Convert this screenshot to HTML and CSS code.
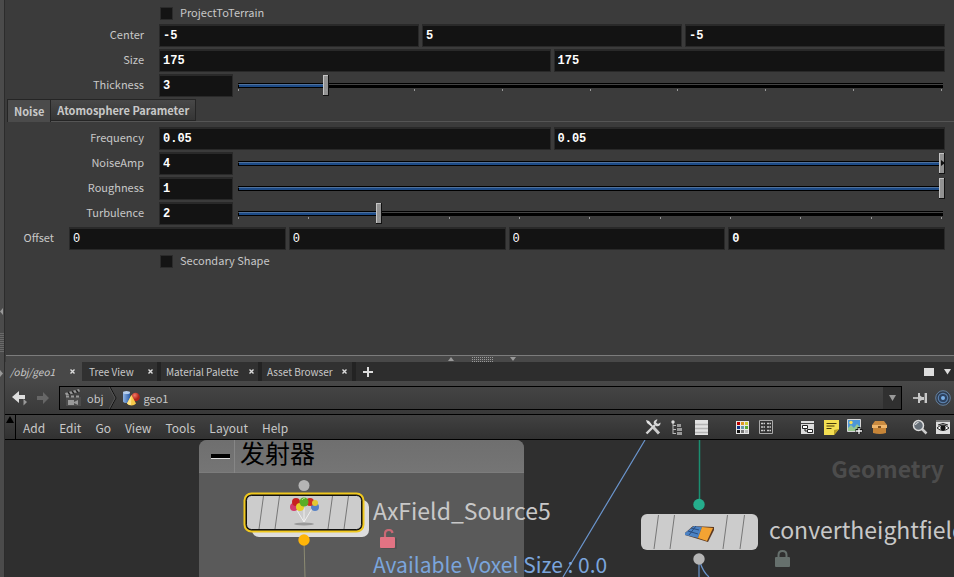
FILE: index.html
```html
<!DOCTYPE html>
<html lang="en">
<head>
<meta charset="utf-8">
<title>/obj/geo1</title>
<link rel="stylesheet" href="styles.css">
</head>
<body>
<div class="rail">
  <svg class="rail-marks" width="4" height="76" viewBox="0 0 4 76"><path d="M3 1v7L0 4.500z" fill="#999"/><path d="M1 26v20M3 26v20" stroke="#8a8a8a" stroke-dasharray="1 1"/><path d="M0 63v7l3-3.500z" fill="#999"/></svg>
</div>
<div class="main">
  <form class="params">
    <div class="check-row first"><input type="checkbox" id="project"><label for="project">ProjectToTerrain</label></div>
    <div class="row"><label for="center1">Center</label><div class="fields"><input type="text" id="center1" value="-5"><input type="text" aria-label="Center Y" value="5"><input type="text" aria-label="Center Z" value="-5"></div></div>
    <div class="row"><label for="size1">Size</label><div class="fields"><input type="text" id="size1" value="175"><input type="text" aria-label="Size Y" value="175"></div></div>
    <div class="row"><label for="thick">Thickness</label><input class="num" type="text" id="thick" value="3"><div class="slider"><input type="range" aria-label="Thickness" min="2" max="10" value="3" style="--fill:0.125"><div class="ticks"><i></i><i></i><i></i><i></i><i></i><i></i><i></i><i></i><i></i></div></div></div>
    <div class="tabs"><button type="button" class="on">Noise</button><button type="button">Atomosphere Parameter</button></div>
    <div class="group">
      <div class="row"><label for="freq">Frequency</label><div class="fields"><input type="text" id="freq" value="0.05"><input type="text" aria-label="Frequency Y" value="0.05"></div></div>
      <div class="row"><label for="amp">NoiseAmp</label><input class="num" type="text" id="amp" value="4"><div class="slider over"><input type="range" aria-label="NoiseAmp" min="0" max="4" value="4" style="--fill:1"></div></div>
      <div class="row"><label for="rough">Roughness</label><input class="num" type="text" id="rough" value="1"><div class="slider"><input type="range" aria-label="Roughness" min="0" max="1" value="1" style="--fill:1"></div></div>
      <div class="row"><label for="turb">Turbulence</label><input class="num" type="text" id="turb" value="2"><div class="slider"><input type="range" aria-label="Turbulence" min="0" max="10" value="2" style="--fill:0.2"><div class="ticks"><i></i><i></i><i></i><i></i><i></i><i></i><i></i><i></i><i></i><i></i><i></i></div></div></div>
      <div class="row offset"><label for="off1">Offset</label><div class="fields"><input type="text" id="off1" value="0"><input type="text" aria-label="Offset 2" value="0"><input type="text" aria-label="Offset 3" value="0"><input type="text" class="keyed" aria-label="Offset 4" value="0"></div></div>
      <div class="check-row"><input type="checkbox" id="second"><label for="second">Secondary Shape</label></div>
    </div>
  </form>
  <div class="splitter"><svg width="68" height="6" viewBox="0 0 68 6"><path d="M0 5h6L3 1zM62 1h6l-3 4z" fill="#999"/><path d="M24 1.500h21M24 3.500h21M24 5.500h21" stroke="#999" stroke-dasharray="1 1"/></svg></div>
  <div class="pane-tabs">
    <div class="ptab on"><a href="#">/obj/geo1</a><button aria-label="Close geo1"><svg width="5" height="5" viewBox="0 0 5 5"><path d="M.5.500l4 4M4.500.500l-4 4" stroke="#ddd" stroke-width="1.400"/></svg></button></div>
    <div class="ptab t2"><a href="#">Tree View</a><button aria-label="Close Tree View"><svg width="5" height="5" viewBox="0 0 5 5"><path d="M.5.500l4 4M4.500.500l-4 4" stroke="#ddd" stroke-width="1.400"/></svg></button></div>
    <div class="ptab t3"><a href="#">Material Palette</a><button aria-label="Close Material Palette"><svg width="5" height="5" viewBox="0 0 5 5"><path d="M.5.500l4 4M4.500.500l-4 4" stroke="#ddd" stroke-width="1.400"/></svg></button></div>
    <div class="ptab t4"><a href="#">Asset Browser</a><button aria-label="Close Asset Browser"><svg width="5" height="5" viewBox="0 0 5 5"><path d="M.5.500l4 4M4.500.500l-4 4" stroke="#ddd" stroke-width="1.400"/></svg></button></div>
    <button class="add" aria-label="New tab"><svg width="10" height="10" viewBox="0 0 10 10"><path d="M5 0v10M0 5h10" stroke="#ddd" stroke-width="2"/></svg></button>
    <button class="max" aria-label="Maximize"><svg width="10" height="8" viewBox="0 0 10 8"><path d="M0 0h10v8H0z" fill="#dcdcdc"/></svg></button>
    <button class="more" aria-label="Pane menu"><svg width="7" height="6" viewBox="0 0 7 6"><path d="M0 0h7L3.500 5.500z" fill="#ddd"/></svg></button>
  </div>
  <div class="path-row">
    <button aria-label="Back"><svg width="18" height="18" viewBox="0 0 18 18"><path d="M0 8l7-6v4h6v4H7v4z" fill="#ddd"/><path d="M11.500 10v6.500L15 13z" fill="#999"/></svg></button>
    <button aria-label="Forward"><svg width="14" height="14" viewBox="0 0 14 14"><path d="M12 7L6 1v4H0v4h6v4z" fill="#666"/></svg></button>
    <div class="path">
      <a href="#"><svg width="18" height="18" viewBox="0 0 18 18"><path d="M1 8h15v9H1z" fill="#4c4c4c"/><path d="M0 4L14 0l1 2.500L1 6.500z" fill="#999"/><path d="M3 3l2 2.500M7 2l2 2.500M11 1l2 2.500" stroke="#222" stroke-width="1.500"/><path d="M1 7.500h15" stroke="#999" stroke-width="2" stroke-dasharray="3 2"/><path d="M3 11h6v5H3zM9 13l4-2v5l-4-2z" fill="#999"/></svg>obj</a>
      <svg class="sep" width="8" height="22" viewBox="0 0 8 22"><path d="M1 0l6 11-6 11" fill="none" stroke="#111"/><path d="M0 0l6 11-6 11" fill="none" stroke="#555"/></svg>
      <a href="#"><svg width="18" height="16" viewBox="0 0 18 16"><defs><linearGradient id="gb"><stop stop-color="#8fb4e4"/><stop offset="1" stop-color="#2b5ca6"/></linearGradient><radialGradient id="gr" cx=".4" cy=".3"><stop stop-color="#f27a66"/><stop offset="1" stop-color="#b02219"/></radialGradient></defs><path d="M1 2.500v9c1 2 6 2 7 0v-9z" fill="url(#gb)"/><ellipse cx="4.500" cy="2.500" rx="3.500" ry="1.500" fill="#b5cdec"/><circle cx="13.500" cy="7" r="4.300" fill="url(#gr)"/><path d="M9.500 5l4.500 8.500c-2 2.500-7 2.500-9 0z" fill="#f6c94a"/><path d="M9.500 5l-4.500 8.500q2 1.500 4 1.500z" fill="#ffe48a"/></svg>geo1</a>
      <button class="drop" aria-label="Path history"><svg width="7" height="6" viewBox="0 0 7 6"><path d="M0 0h7L3.500 6z" fill="#999"/></svg></button>
    </div>
    <button class="pin" aria-label="Pin"><svg width="15" height="12" viewBox="0 0 15 12"><path d="M0 6h5" stroke="#ddd" stroke-width="1.500"/><path d="M5 1l2 0v2.500l2 1.500h3V1h2v10h-2V8H9L7 9v2H5z" fill="#c8c8c8"/><path d="M11.500 1v10" stroke="#777"/></svg></button>
    <button class="target" aria-label="Follow selection"><svg width="16" height="16" viewBox="0 0 16 16"><circle cx="8" cy="8" r="7.300" fill="#2f3c4e" stroke="#65809f"/><circle cx="8" cy="8" r="4.700" fill="#2d4260" stroke="#5a80ad" stroke-width="1.200"/><circle cx="8" cy="8" r="2" fill="#7ab0e8"/></svg></button>
  </div>
  <div class="menubar">
    <button class="stow" aria-label="Hide menu"><svg width="8" height="7" viewBox="0 0 8 7"><path d="M4 0l4 7H0z" fill="#000"/></svg></button>
    <nav><button>Add</button><button>Edit</button><button>Go</button><button>View</button><button>Tools</button><button>Layout</button><button>Help</button></nav>
    <div class="tools">
      <button aria-label="Tools"><svg width="16" height="16" viewBox="0 0 16 16"><path d="M1.500 14.500L10 6" stroke="#d6d6d6" stroke-width="2.400"/><path d="M15.500 3.500L13 5 11 3.500 12.500.500C9.500.5 8 3 9 5l2 2c2.500 1 5-1 4.500-3.500z" fill="#d6d6d6"/><path d="M1 1l3 1 4 5-1 1-5-4z" fill="#e2e2e2"/><path d="M8.500 8.500l5.500 6" stroke="#ccc" stroke-width="3"/></svg></button>
      <button aria-label="Tree"><svg width="12" height="15" viewBox="0 0 12 15"><path d="M2 3v11M2 5.500h3M2 9.500h3M2 13.500h3" stroke="#bbb" fill="none"/><circle cx="2" cy="2" r="1.700" fill="#ddd"/><path d="M6 4h4v3H6zM6 8h5v3H6zM6 12h5v3H6z" fill="#999"/></svg></button>
      <button aria-label="List"><svg width="13" height="15" viewBox="0 0 13 15"><path d="M0 0h13v15H0z" fill="#e2e2e2"/><path d="M0 4.500h13M0 8.500h13M0 12.500h13" stroke="#b4b4b4" stroke-width="1.500"/></svg></button>
      <button class="gap" aria-label="Color palette"><svg width="13" height="13" viewBox="0 0 13 13"><path d="M0 0h13v13H0z" fill="#e8e8e8"/><path d="M1 1h3v3H1z" fill="#b00"/><path d="M5 1h3v3H5z" fill="#d92"/><path d="M9 1h3v3H9z" fill="#cc3"/><path d="M1 5h3v3H1z" fill="#138"/><path d="M5 5h3v3H5z" fill="#69a"/><path d="M9 5h3v3H9z" fill="#5a3"/><path d="M1 9h3v3H1z" fill="#111"/><path d="M5 9h3v3H5z" fill="#777"/><path d="M9 9h3v3H9z" fill="#bbb"/></svg></button>
      <button aria-label="Shape palette"><svg width="14" height="14" viewBox="0 0 14 14"><path d="M.5.500h13v13H.5z" fill="#333" stroke="#aaa"/><path d="M2 3.500h4M8 3.500h4M2 7h4M8 7h4M2 10.500h4M8 10.500h4" stroke="#ccc" stroke-width="1.500" stroke-dasharray="2.500 .5"/></svg></button>
      <button class="gap" aria-label="Network boxes"><svg width="13" height="13" viewBox="0 0 13 13"><path d="M0 0h13v13H0z" fill="#ddd"/><path d="M0 2.500h13" stroke="#444"/><path d="M1.500 4.500h5v3h-5zM6.500 8.500h5v3h-5z" fill="#fff" stroke="#222"/><path d="M4 8v2h2" stroke="#222" fill="none"/></svg></button>
      <button aria-label="Sticky note"><svg width="15" height="15" viewBox="0 0 15 15"><path d="M0 0h15v9l-5 6H0z" fill="#f3de52"/><path d="M10 15v-5l5-1z" fill="#b59c24"/><path d="M2.500 3.500h10M2.500 6h8M2.500 8.500h5" stroke="#44390b"/></svg></button>
      <button aria-label="Background image"><svg width="16" height="16" viewBox="0 0 16 16"><path d="M.5.500h13v12H.5z" fill="#4d96d8" stroke="#d6d6d6"/><path d="M1 12v-3l3-3 3 3 3-4 3 3v4z" fill="#97c790"/><circle cx="4" cy="3.500" r="1.700" fill="#f8df5a"/><path d="M12 8v7M8.500 11.500h7" stroke="#111" stroke-width="3"/><path d="M12 9v6M9 12h6" stroke="#fff" stroke-width="1.300"/></svg></button>
      <button aria-label="Asset box"><svg width="15" height="13" viewBox="0 0 15 13"><path d="M3 0h9l3 4H0z" fill="#c98a40"/><path d="M0 4h15v3H0z" fill="#efb66c"/><path d="M1 7h13v5q-6 2-13 0z" fill="#c78538"/><path d="M6 5h3v2H6z" fill="#7a4d1e"/></svg></button>
      <button class="gap" aria-label="Search"><svg width="16" height="16" viewBox="0 0 16 16"><path d="M10 10l4.500 4.500" stroke="#ccc" stroke-width="2.500"/><circle cx="6.500" cy="6.500" r="5" fill="#666f78" stroke="#ddd" stroke-width="1.500"/><path d="M3.500 6a3 3 0 013-2.500" stroke="#eee" fill="none"/></svg></button>
      <button class="last" aria-label="Display options"><svg width="14" height="14" viewBox="0 0 14 14"><path d="M0 0h14v14H0z" fill="#ddd"/><path d="M0 0h14v2H0z" fill="#777"/><path d="M1 8q6-6 12 0-6 5-12 0z" fill="#fff" stroke="#222"/><circle cx="7" cy="7.800" r="2.600" fill="#111"/><path d="M2 5q5-3 10 0" stroke="#222" fill="none"/></svg></button>
    </div>
  </div>
  <div class="canvas">
    <div class="netbox"><div class="nethead"><button aria-label="Collapse"><i></i></button><span>发射器</span></div></div>
    <svg class="wires" width="949" height="137" viewBox="5 440 949 137"><path d="M304 540l1 37" stroke="#8c8b72" fill="none"/><path d="M645 440L563 577M699 560v17M700 562q3 10 9 15" stroke="#6a94cc" stroke-width="1.200" fill="none"/><path d="M699.500 440v64" stroke="#1b8e70" stroke-width="1.500"/></svg>
    <svg class="node-a" width="130" height="70" viewBox="240 478 130 70"><rect x="252" y="500" width="117" height="37" rx="7" fill="#ddd"/><rect x="244.500" y="493.500" width="119" height="38" rx="7" fill="#111" stroke="#f0c81e" stroke-width="2"/><rect x="246.500" y="495.500" width="115" height="34" rx="5" fill="#ccc" stroke="#111"/><path d="M263.500 496l-4.500 33M279.500 496l-4.500 33M332.500 496l-4.500 33M348.500 496l-4.500 33" stroke="#777"/><ellipse cx="304" cy="524" rx="10" ry="1.500" fill="#999"/><path d="M295 507l9 15 9-15M304 508v14" stroke="#eee" fill="none"/><circle cx="294" cy="507" r="4" fill="#d33a6c"/><circle cx="315" cy="507" r="4" fill="#5580c5"/><circle cx="296" cy="502" r="4" fill="#c62020"/><circle cx="310" cy="502" r="4" fill="#cc2b22"/><circle cx="300" cy="507" r="4" fill="#e5cf26"/><circle cx="315" cy="503" r="3" fill="#e3c733"/><circle cx="304" cy="502" r="4.500" fill="#58ae26"/><path d="M302 500q1-2 3-2" stroke="#b6e08c" fill="none"/><circle cx="304" cy="485.500" r="5.500" fill="#b5b5b5"/><circle cx="304" cy="540" r="5.700" fill="#ffb508"/></svg>
    <div class="name-a">AxField_Source5</div>
    <svg class="lock-a" width="18" height="20" viewBox="0 0 18 20"><path d="M5 10V5q0-4 4-4 3 0 3.500 3" fill="none" stroke="#ca6874" stroke-width="2.200"/><rect x="1" y="9" width="16" height="11" rx="1" fill="#444" opacity=".4"/><rect x="0" y="8" width="15" height="11" rx="1" fill="#e27383"/></svg>
    <div class="info">Available Voxel Size : 0.0</div>
    <svg class="node-b" width="120" height="68" viewBox="640 498 120 68"><rect x="641" y="514" width="117" height="36" rx="6" fill="#ccc"/><path d="M658.500 515l-4.500 34M674.500 515l-4.500 34M727.500 515l-4.500 34M744.500 515l-4.500 34" stroke="#777"/><path d="M685 533l8-7 21 1v3l-6 12-23-7z" fill="#5d3920"/><path d="M685 533l9-7 8 1-4 11-13-3z" fill="#4b82c4"/><path d="M702 527l11 1-6 13-9-3z" fill="#f3a333"/><path d="M691 528l8 2M688 531l10 3M696 526l-7 9" stroke="#284c7e" fill="none"/><circle cx="699" cy="504.500" r="5.700" fill="#25ad8c"/><circle cx="699" cy="559" r="5.700" fill="#b5b5b5"/></svg>
    <div class="name-b">convertheightfield1</div>
    <svg class="lock-b" width="15" height="17" viewBox="0 0 15 17"><path d="M3.500 8V5q0-4 4-4t4 4v3" fill="none" stroke="#66706d" stroke-width="2"/><rect y="7" width="15" height="10" rx="1" fill="#66706d"/></svg>
    <div class="context">Geometry</div>
  </div>
</div>
</body>
</html>
```
FILE: styles.css
```css
* { box-sizing: border-box; }
body {
  margin: 0;
  height: 100vh;
  display: flex;
  overflow: hidden;
  background: #3b3b3b;
  color: #c8c8c8;
  font-family: "Noto Sans CJK SC", "Noto Sans", sans-serif;
  font-size: 11px;
}
button { padding: 0; border: 0; background: none; color: inherit; font: inherit; display: flex; align-items: center; }
a { color: inherit; text-decoration: none; }
svg { display: block; flex: none; }
.rail { flex: none; width: 5px; background: #4b4b4b; border-right: 1px solid #2c2c2c; padding-top: 307px; }
.main { flex: 1; min-width: 0; display: flex; flex-direction: column; }

/* parameters */
.params { flex: none; height: 355px; padding-left: 2px; }
.check-row { display: flex; align-items: center; height: 20px; padding-left: 153px; }
.check-row.first { height: 23px; padding-top: 3px; }
.check-row input { appearance: none; width: 13px; height: 13px; margin: 0 7px 0 0; background: #141414; border: 1px solid #2b2b2b; }
.check-row label { padding-bottom: 2px; }
.row { display: flex; align-items: center; height: 25px; padding-right: 9px; }
.row label { width: 137px; margin-right: 15px; padding-bottom: 3px; text-align: right; }
.row.offset label { width: 47px; }
.fields { flex: 1; display: flex; gap: 3px; }
.row input[type="text"] {
  min-width: 0; flex: 1; height: 23px; padding: 0 3px;
  border: 1px solid #292929; border-top-width: 2px; border-radius: 0;
  background: #131313; color: #fff; outline: 0;
  font: bold 12px "Liberation Mono", "DejaVu Sans Mono", monospace;
}
.row input.num { flex: 0 0 74px; }
.row.offset input[type="text"] { font-weight: normal; }
.row.offset input.keyed { font-weight: bold; }
.slider { flex: 1; position: relative; height: 21px; margin-left: 2px; }
.slider input { appearance: none; display: block; width: 100%; height: 21px; margin: 0; background: none; }
.slider input::-webkit-slider-runnable-track {
  height: 5px;
  background:
    linear-gradient(#000 1px, #4f719c 1px 2px, #1d4b87 2px 4px, #000 4px) 4px 0 / calc((100% - 6px) * var(--fill)) 5px no-repeat,
    linear-gradient(#000 1px, #444 1px 2px, #000 2px) 3px 0 / calc(100% - 5px) 5px no-repeat;
}
.slider input::-webkit-slider-thumb {
  appearance: none; width: 6px; height: 21px; margin-top: -8px;
  background: #929292; border: solid #111; border-width: 0 1px 1px 0; box-shadow: inset 1px 1px #c4c4c4;
}
.over::after { content: ""; position: absolute; right: 0; top: 7px; border: 4px solid transparent; border-width: 3px 0 3px 4px; border-left-color: #111; }
.ticks { position: absolute; left: 3px; right: 3px; top: 14px; display: flex; justify-content: space-between; pointer-events: none; }
.ticks i { width: 1px; height: 2px; background: #999; }
.tabs { display: flex; height: 24px; padding-top: 1px; border-bottom: 1px solid #555; }
.tabs button {
  justify-content: center; height: 22px; padding: 0 6px; font-weight: bold;
  border: 1px solid #252525; border-left-width: 0; background: linear-gradient(#484848, #353535);
}
.tabs .on { height: 23px; border-left-width: 1px; border-bottom: 0; background: #4b4b4b; }
.group { padding: 4px 0; }

/* pane header */
.splitter { flex: none; display: flex; justify-content: center; height: 7px; padding-left: 4px; border-top: 1px solid #7c7c7c; background: #484848; margin-left: 1px; }
.pane-tabs { flex: none; display: flex; height: 19px; background: #2d2d2d; }
.ptab { display: flex; align-items: center; justify-content: space-between; padding: 0 7px 0 6px; border-right: 4px solid #232323; font-size: 10px; background: #313131; }
.ptab.on { width: 77px; padding-left: 5px; border: 0; font-style: italic; background: #484848; }
.t2 { width: 79px; padding-left: 7px; padding-right: 4px; }
.t3 { width: 101px; padding-left: 5px; padding-right: 4px; }
.t4 { width: 94px; padding-left: 5px; padding-right: 5px; }
.add { margin-left: 7px; }
.max { margin-left: auto; }
.more { margin: 0 3px 0 10px; }
.path-row { flex: none; display: flex; align-items: center; height: 33px; padding: 0 3px 0 7px; gap: 7px; background: linear-gradient(#484848, #393939); }
.path { flex: 1; display: flex; align-items: center; height: 24px; margin-left: 1px; border: 1px solid #000; background: linear-gradient(#444, #393939); font-size: 11px; }
.path a { display: flex; align-items: center; gap: 4px; margin-left: 5px; }
.sep { margin-left: 5px; }
.drop { margin-left: auto; width: 18px; height: 22px; justify-content: center; background: #303030; }
.pin { margin-left: 4px; }
.menubar { flex: none; display: flex; align-items: center; height: 26px; border: solid #000; border-width: 1px 0; background: linear-gradient(#414141, #313131); font-size: 12px; }
.stow { align-items: flex-start; width: 11px; height: 24px; padding: 1px; border-right: 1px solid #000; }
nav { display: flex; gap: 14px; margin-left: 7px; }
.tools { display: flex; align-items: center; margin-left: auto; }
.tools button { width: 24px; justify-content: center; }
.tools .gap { margin-left: 17px; }
.tools .last { width: 22px; }

/* network canvas */
.canvas { flex: 1; position: relative; overflow: hidden; background: #2f2f2f; }
.canvas > * { position: absolute; white-space: nowrap; }
.netbox { left: 194px; top: 0; width: 325px; height: 160px; border-radius: 8px 8px 0 0; background: #5a5a5a; overflow: hidden; }
.nethead { display: flex; align-items: center; height: 33px; border-bottom: 1px solid #7c7c7c; background: linear-gradient(#6f6f6f, #757575); color: #000; font-size: 25px; line-height: 28px; }
.nethead button { width: 36px; height: 33px; padding-left: 12px; border-right: 1px solid #868686; }
.nethead i { width: 19px; height: 5px; background: #000; border-bottom: 1px solid #ddd; }
.nethead span { margin-left: 5px; padding-bottom: 8px; }
.wires { left: 0; top: 0; }
.node-a { left: 235px; top: 38px; }
.name-a, .name-b, .info, .context { font-size: 23px; line-height: 32px; }
.name-a { left: 368px; top: 54px; }
.lock-a { left: 375px; top: 89px; }
.info { left: 368px; top: 108px; color: #7ba5dc; font-size: 21px; }
.node-b { left: 635px; top: 58px; }
.name-b { left: 764px; top: 73px; }
.lock-b { left: 770px; top: 110px; }
.context { right: 10px; top: 12px; color: #4c4c4c; font-weight: bold; }
```
